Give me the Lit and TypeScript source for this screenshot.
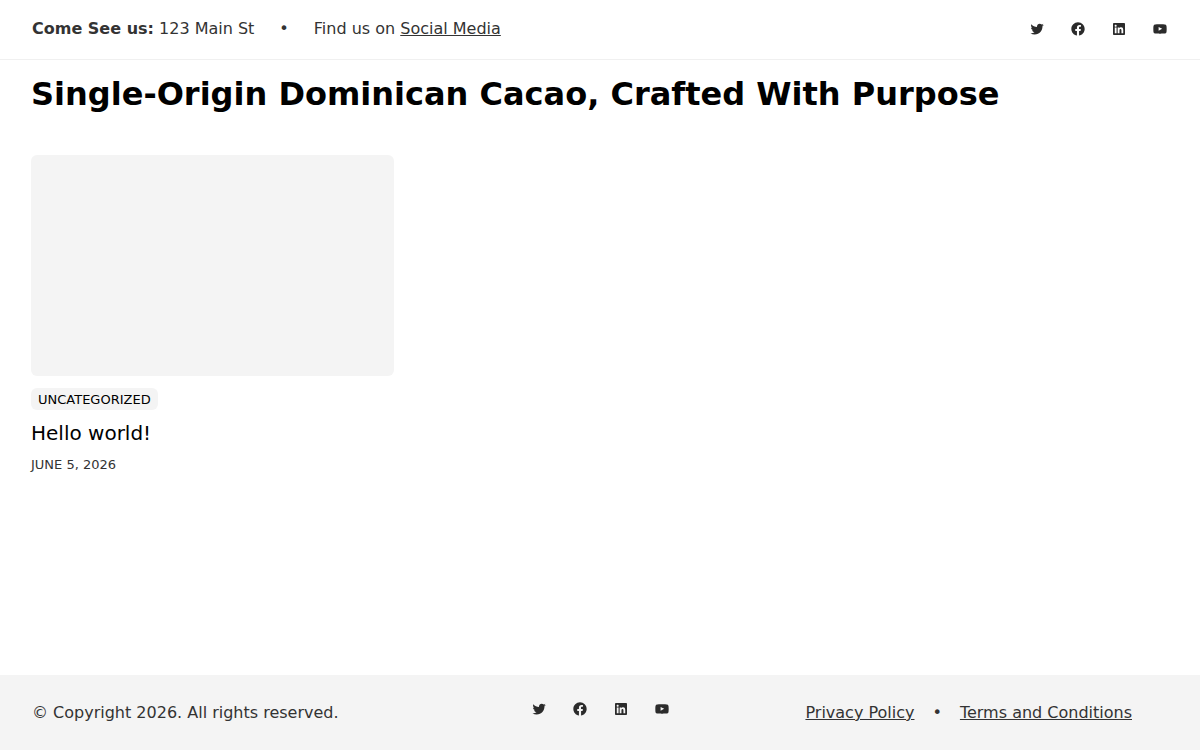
import { LitElement, html, css, svg } from "lit";
import { customElement } from "lit/decorators.js";

const ICONS = [
  {
    name: "Twitter",
    path: "M22.23,5.924c-0.736,0.326-1.527,0.547-2.357,0.646c0.847-0.508,1.498-1.312,1.804-2.27 c-0.793,0.47-1.671,0.812-2.606,0.996C18.324,4.498,17.257,4,16.077,4c-2.266,0-4.103,1.837-4.103,4.103 c0,0.322,0.036,0.635,0.106,0.935C8.67,8.867,5.647,7.234,3.623,4.751C3.27,5.357,3.067,6.062,3.067,6.814 c0,1.424,0.724,2.679,1.825,3.415c-0.673-0.021-1.305-0.206-1.859-0.513c0,0.017,0,0.034,0,0.052c0,1.988,1.414,3.647,3.292,4.023 c-0.344,0.094-0.707,0.144-1.081,0.144c-0.264,0-0.521-0.026-0.772-0.074c0.522,1.63,2.038,2.816,3.833,2.85 c-1.404,1.1-3.174,1.756-5.096,1.756c-0.331,0-0.658-0.019-0.979-0.057c1.816,1.164,3.973,1.843,6.29,1.843 c7.547,0,11.675-6.252,11.675-11.675c0-0.178-0.004-0.355-0.012-0.531C20.985,7.47,21.68,6.747,22.23,5.924z",
  },
  {
    name: "Facebook",
    path: "M12 2C6.5 2 2 6.5 2 12c0 5 3.7 9.1 8.4 9.9v-7H7.9V12h2.5V9.8c0-2.5 1.5-3.9 3.8-3.9 1.1 0 2.2.2 2.2.2v2.5h-1.3c-1.2 0-1.6.8-1.6 1.6V12h2.8l-.4 2.9h-2.3v7C18.3 21.1 22 17 22 12c0-5.500-4.500-10-10-10z",
  },
  {
    name: "LinkedIn",
    path: "M19.7,3H4.3C3.582,3,3,3.582,3,4.3v15.4C3,20.418,3.582,21,4.3,21h15.4c0.718,0,1.3-0.582,1.3-1.3V4.3 C21,3.582,20.418,3,19.7,3z M8.339,18.338H5.667v-8.59h2.672V18.338z M7.004,8.574c-0.857,0-1.549-0.694-1.549-1.548 c0-0.855,0.691-1.548,1.549-1.548c0.854,0,1.547,0.694,1.547,1.548C8.551,7.881,7.858,8.574,7.004,8.574z M18.339,18.338h-2.669 v-4.177c0-0.996-0.017-2.278-1.387-2.278c-1.389,0-1.601,1.086-1.601,2.206v4.249h-2.667v-8.59h2.559v1.174h0.037 c0.356-0.675,1.227-1.387,2.526-1.387c2.703,0,3.203,1.779,3.203,4.092V18.338z",
  },
  {
    name: "YouTube",
    path: "M21.8,8.001c0,0-0.195-1.378-0.795-1.985c-0.76-0.797-1.613-0.801-2.004-0.847c-2.799-0.202-6.997-0.202-6.997-0.202 h-0.009c0,0-4.198,0-6.997,0.202C4.608,5.216,3.756,5.22,2.995,6.016C2.395,6.623,2.2,8.001,2.2,8.001S2,9.620,2,11.238v1.517 c0,1.618,0.2,3.237,0.2,3.237s0.195,1.378,0.795,1.985c0.761,0.797,1.760,0.771,2.205,0.855c1.600,0.153,6.800,0.201,6.800,0.201 s4.203-0.006,7.001-0.209c0.391-0.047,1.243-0.051,2.004-0.847c0.600-0.607,0.795-1.985,0.795-1.985s0.200-1.618,0.200-3.237v-1.517 C22,9.620,21.800,8.001,21.800,8.001z M9.935,14.594l-0.001-5.620l5.404,2.820L9.935,14.594z",
  },
];

@customElement("social-links")
export class SocialLinks extends LitElement {
  static styles = css`
    :host {
      display: block;
    }
    .list {
      display: flex;
      gap: 17px;
      margin: 0;
      padding: 0;
      list-style: none;
    }
    .link {
      display: block;
      padding: 4px;
      color: #2b2b2b;
    }
    .icon {
      display: block;
      width: 16px;
      height: 16px;
      fill: currentColor;
    }
  `;

  render() {
    return html`<ul class="list">
      ${ICONS.map(
        (icon) => html`<li>
          <a class="link" href="#" aria-label=${icon.name}>
            <svg class="icon" viewBox="0 0 24 24" aria-hidden="true">${svg`<path d=${icon.path}></path>`}</svg>
          </a>
        </li>`
      )}
    </ul>`;
  }
}

@customElement("app-root")
export class AppRoot extends LitElement {
  static styles = css`
    :host {
      display: flex;
      flex-direction: column;
      min-height: 100vh;
      background: #ffffff;
      color: #333333;
      font: 16px/26px "DejaVu Sans", sans-serif;
    }
    p,
    h1,
    h2 {
      margin: 0;
    }
    a {
      color: inherit;
    }
    .topbar {
      display: flex;
      align-items: center;
      justify-content: space-between;
      padding: 16px 28px 17px 32px;
      border-bottom: 1px solid #f0f0f0;
    }
    .info {
      display: flex;
      gap: 25px;
    }
    .main {
      flex: 1;
      padding: 12px 31px;
    }
    .title {
      color: #000000;
      font-size: 32px;
      line-height: 44px;
      font-weight: 700;
    }
    .posts {
      display: grid;
      grid-template-columns: repeat(3, 1fr);
      gap: 24px;
      margin-top: 39px;
    }
    .thumb {
      display: block;
      height: 221px;
      border-radius: 6px;
      background: #f4f4f4;
    }
    .tag {
      display: inline-block;
      margin-top: 12px;
      padding: 2px 7px 0;
      border-radius: 6px;
      background: #f4f4f4;
      color: #000000;
      font-size: 13px;
      line-height: 20px;
      text-decoration: none;
      vertical-align: top;
    }
    .post-title {
      margin-top: 8px;
      color: #000000;
      font-size: 20px;
      line-height: 30px;
      font-weight: 400;
    }
    .post-title a {
      text-decoration: none;
    }
    .date {
      display: block;
      margin-top: 6px;
      font-size: 13px;
      line-height: 22px;
    }
    .footer {
      display: grid;
      grid-template-columns: 1fr auto 1fr;
      padding: 22px 32px 24px;
      background: #f4f4f4;
    }
    .copyright,
    .legal {
      padding-top: 3px;
    }
    .legal {
      display: flex;
      justify-content: flex-end;
      gap: 18px;
      padding-right: 36px;
    }
  `;

  render() {
    return html`
      <header class="topbar">
        <div class="info">
          <p><strong>Come See us:</strong> 123 Main St</p>
          <span>•</span>
          <p>Find us on <a href="#">Social Media</a></p>
        </div>
        <social-links></social-links>
      </header>
      <main class="main">
        <h1 class="title">Single-Origin Dominican Cacao, Crafted With Purpose</h1>
        <div class="posts">
          <article>
            <a class="thumb" href="#" aria-label="Hello world!"></a>
            <a class="tag" href="#">UNCATEGORIZED</a>
            <h2 class="post-title"><a href="#">Hello world!</a></h2>
            <time class="date" datetime="2026-06-05">JUNE 5, 2026</time>
          </article>
        </div>
      </main>
      <footer class="footer">
        <p class="copyright">© Copyright 2026. All rights reserved.</p>
        <social-links></social-links>
        <nav class="legal" aria-label="Legal">
          <a href="#">Privacy Policy</a>
          <span>•</span>
          <a href="#">Terms and Conditions</a>
        </nav>
      </footer>
    `;
  }
}
